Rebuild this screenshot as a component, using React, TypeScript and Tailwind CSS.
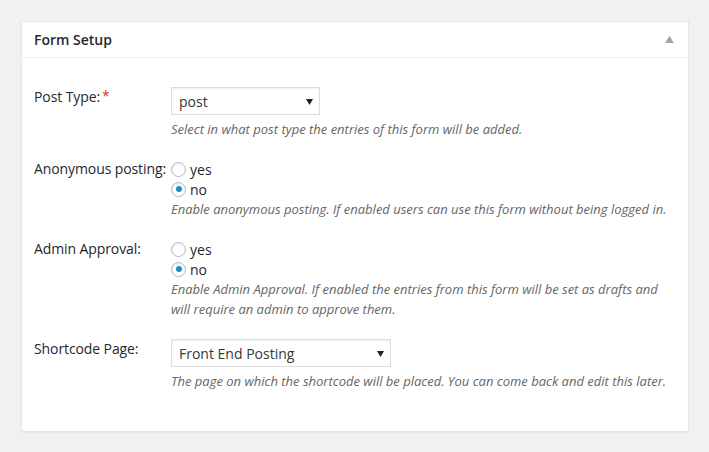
const font = { fontFamily: '"Open Sans", "Noto Sans", sans-serif' };

function Radio({ checked, label }: { checked?: boolean; label: string }) {
  return (
    <label className="flex items-center h-5 gap-1 text-[14px] text-[#23282d]">
      <span className="w-[15px] h-[15px] rounded-full border border-[#b4b9be] bg-white shadow-[inset_0_1px_2px_rgba(0,0,0,0.1)] flex items-center justify-center shrink-0">
        {checked && <span className="w-[6px] h-[6px] rounded-full bg-[#1e8cbe]" />}
      </span>
      <span>{label}</span>
    </label>
  );
}

function Select({ value, width }: { value: string; width: string }) {
  return (
    <div
      className={`${width} h-[28px] border border-[#ddd] bg-white shadow-[inset_0_1px_2px_rgba(0,0,0,0.07)] flex items-center justify-between pl-[7px] pr-[6px] text-[14px] text-[#32373c]`}
    >
      <span>{value}</span>
      <svg width="7" height="6" viewBox="0 0 7 6" className="mt-[1px]">
        <path d="M0 0 H7 L3.5 6 Z" fill="#222" />
      </svg>
    </div>
  );
}

function Desc({ children, tight }: { children: React.ReactNode; tight?: boolean }) {
  return <p className={`text-[13px] leading-5 italic text-[#666] ${tight ? "" : "mt-1"}`}>{children}</p>;
}

function Row({ label, required, children }: { label: string; required?: boolean; children: React.ReactNode }) {
  return (
    <div className="flex">
      <div className="w-[137px] shrink-0 text-[14px] leading-5 text-[#23282d] whitespace-nowrap tracking-[-0.1px]">
        {label}
        {required && <span className="text-[#dc3232] ml-[2px] relative -top-[1px]">*</span>}
      </div>
      <div className="flex-1">{children}</div>
    </div>
  );
}

export default function App() {
  return (
    <div className="min-h-[452px] bg-[#f1f1f1] pt-[21px] px-[21px]" style={font}>
      <div className="w-[668px] bg-white border border-[#e5e5e5] shadow-[0_1px_1px_rgba(0,0,0,0.04)]">
        <div className="h-[36px] border-b border-[#eee] flex items-center justify-between pl-[12px] pr-[14px]">
          <h2 className="text-[14px] font-semibold text-[#23282d]">Form Setup</h2>
          <svg width="9" height="7" viewBox="0 0 9 7">
            <path d="M4.5 0 L9 7 H0 Z" fill="#a0a5aa" />
          </svg>
        </div>
        <div className="pl-[12px] pr-[12px] pt-[29px] pb-[40px] flex flex-col gap-[20px]">
          <Row label="Post Type:" required>
            <Select value="post" width="w-[149px]" />
            <Desc>Select in what post type the entries of this form will be added.</Desc>
          </Row>
          <Row label="Anonymous posting:">
            <Radio label="yes" />
            <Radio label="no" checked />
            <Desc tight>Enable anonymous posting. If enabled users can use this form without being logged in.</Desc>
          </Row>
          <Row label="Admin Approval:">
            <Radio label="yes" />
            <Radio label="no" checked />
            <Desc tight>
              Enable Admin Approval. If enabled the entries from this form will be set as drafts and
              <br />
              will require an admin to approve them.
            </Desc>
          </Row>
          <Row label="Shortcode Page:">
            <Select value="Front End Posting" width="w-[220px]" />
            <Desc>The page on which the shortcode will be placed. You can come back and edit this later.</Desc>
          </Row>
        </div>
      </div>
    </div>
  );
}
